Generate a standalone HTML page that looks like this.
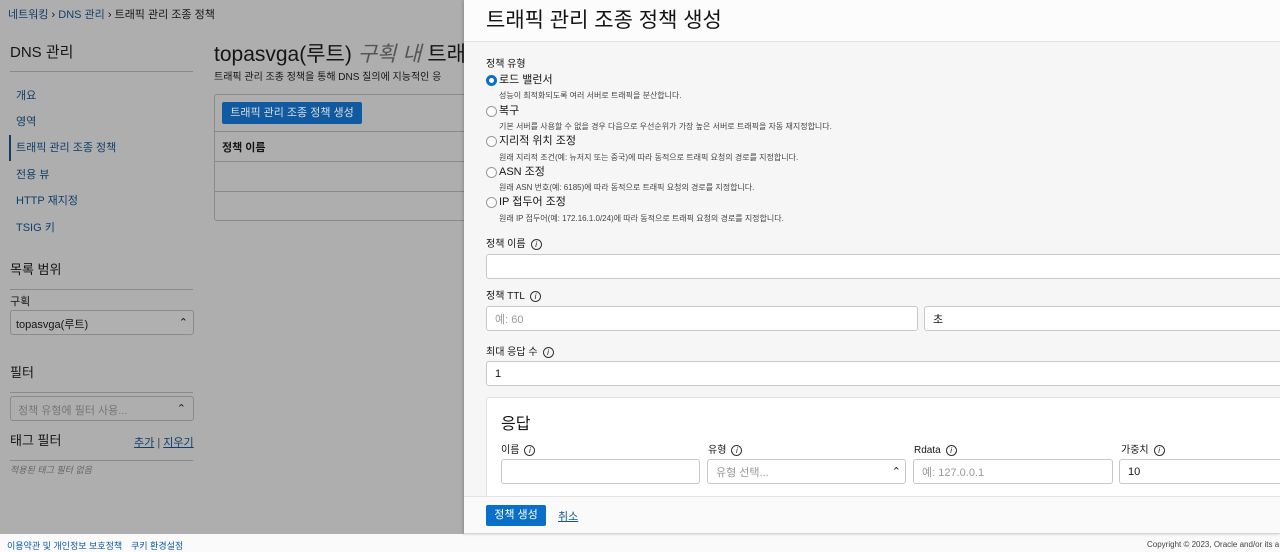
<!DOCTYPE html>
<html><head><meta charset="utf-8">
<style>
*{box-sizing:border-box;margin:0;padding:0}
body{width:1280px;height:552px;overflow:hidden;position:relative;background:#aeaeae;font-family:"Liberation Sans","Noto Sans CJK KR",sans-serif;color:#161513}
.a{position:absolute;white-space:nowrap}
.lnk{color:#0f3f6b}
.hr{position:absolute;height:1px;background:#8a8a8a}
.inp{position:absolute;background:#fff;border:1px solid #c8c8c8;border-radius:3px;font-size:11px;padding-left:8px;display:flex;align-items:center}
.info{display:inline-block;width:11px;height:11px;border:1px solid #333;border-radius:50%;font-size:8px;line-height:9px;text-align:center;font-style:italic;margin-left:5px;vertical-align:middle}
.rad{position:absolute;width:11px;height:11px;border:1px solid #999;border-radius:50%;background:#fff}
.lab{font-size:11px;color:#161513;line-height:13px}
.desc{font-size:8px;color:#444}
</style></head><body>
<div class="a" style="left:8px;top:6px;font-size:11px"><span style="color:#0f3f6b">네트워킹</span> › <span style="color:#0f3f6b">DNS 관리</span> › 트래픽 관리 조종 정책</div>
<div class="a" style="left:10px;top:41px;font-size:15px">DNS 관리</div>
<div class="hr" style="left:10px;top:71px;width:183px"></div>
<div class="a lnk" style="left:16px;top:87px;font-size:11px">개요</div>
<div class="a lnk" style="left:16px;top:113px;font-size:11px">영역</div>
<div class="a" style="left:9px;top:135px;width:2px;height:26px;background:#0f3f6b"></div>
<div class="a lnk" style="left:16px;top:139px;font-size:11px">트래픽 관리 조종 정책</div>
<div class="a lnk" style="left:16px;top:166px;font-size:11px">전용 뷰</div>
<div class="a lnk" style="left:16px;top:192px;font-size:11px">HTTP 재지정</div>
<div class="a lnk" style="left:16px;top:219px;font-size:11px">TSIG 키</div>
<div class="a" style="left:10px;top:259px;font-size:13px">목록 범위</div>
<div class="hr" style="left:10px;top:289px;width:183px"></div>
<div class="a" style="left:10px;top:293px;font-size:11px">구획</div>
<div class="a" style="left:10px;top:310px;width:184px;height:25px;border:1px solid #8a8a8a;border-radius:3px;background:#b0b0b0;font-size:11px;padding:5px 5px">topasvga(루트)<span style="float:right">⌃</span></div>
<div class="a" style="left:10px;top:362px;font-size:13px">필터</div>
<div class="hr" style="left:10px;top:392px;width:183px"></div>
<div class="a" style="left:10px;top:396px;width:184px;height:25px;border:1px solid #8a8a8a;border-radius:3px;font-size:11px;padding:5px 7px;color:#777">정책 유형에 필터 사용...<span style="float:right;color:#222">⌃</span></div>
<div class="a" style="left:10px;top:430px;font-size:13px">태그 필터</div>
<div class="a" style="left:134px;top:434px;font-size:11px;color:#0f3f6b"><u>추가</u> <span style="color:#444">|</span> <u>지우기</u></div>
<div class="hr" style="left:10px;top:460px;width:183px"></div>
<div class="a" style="left:10px;top:463px;font-size:9px;font-style:italic;color:#666">적용된 태그 필터 없음</div>

<div class="a" style="left:214px;top:38px;font-size:21px">topasvga(루트) <i style="color:#555">구획 내</i> 트래</div>
<div class="a" style="left:214px;top:68px;font-size:10px">트래픽 관리 조종 정책을 통해 DNS 질의에 지능적인 응</div>
<div class="a" style="left:214px;top:94px;width:260px;height:127px;border:1px solid #8a8a8a;border-radius:3px"></div>
<div class="a" style="left:222px;top:102px;width:140px;height:22px;background:#0f5aa0;border-radius:2px;color:#ddd;font-size:11px;text-align:center;line-height:22px">트래픽 관리 조종 정책 생성</div>
<div class="hr" style="left:215px;top:131px;width:250px"></div>
<div class="a" style="left:222px;top:139px;font-size:11px;font-weight:bold">정책 이름</div>
<div class="hr" style="left:215px;top:161px;width:250px"></div>
<div class="hr" style="left:215px;top:191px;width:250px"></div>

<div class="a" style="left:0;top:534px;width:1280px;height:18px;background:#fafafa"></div>
<div class="a" style="left:7px;top:539px;font-size:9px;color:#0f5aa0">이용약관 및 개인정보 보호정책</div>
<div class="a" style="left:131px;top:539px;font-size:9px;color:#0f5aa0">쿠키 환경설정</div>
<div class="a" style="left:1147px;top:540px;font-size:8px;color:#444">Copyright © 2023, Oracle and/or its a</div>

<div class="a" style="left:464px;top:0;width:816px;height:534px;background:#f6f6f6;box-shadow:-1px 0 3px rgba(0,0,0,.2)"></div>
<div class="a" style="left:464px;top:0;width:816px;height:42px;background:#fcfcfc;border-bottom:1px solid #e3e3e3"></div>
<div class="a" style="left:486px;top:4px;font-size:21px">트래픽 관리 조종 정책 생성</div>

<div class="a lab" style="left:486px;top:58px;font-size:10px">정책 유형</div>
<div class="rad" style="left:486px;top:75px;border:3px solid #0a6fc8"></div>
<div class="a lab" style="left:499px;top:74px">로드 밸런서</div>
<div class="a desc" style="left:499px;top:90px">성능이 최적화되도록 여러 서버로 트래픽을 분산합니다.</div>
<div class="rad" style="left:486px;top:106px"></div>
<div class="a lab" style="left:499px;top:105px">복구</div>
<div class="a desc" style="left:499px;top:121px">기본 서버를 사용할 수 없을 경우 다음으로 우선순위가 가장 높은 서버로 트래픽을 자동 재지정합니다.</div>
<div class="rad" style="left:486px;top:136px"></div>
<div class="a lab" style="left:499px;top:135px">지리적 위치 조정</div>
<div class="a desc" style="left:499px;top:152px">원래 지리적 조건(예: 뉴저지 또는 중국)에 따라 동적으로 트래픽 요청의 경로를 지정합니다.</div>
<div class="rad" style="left:486px;top:167px"></div>
<div class="a lab" style="left:499px;top:166px">ASN 조정</div>
<div class="a desc" style="left:499px;top:182px">원래 ASN 번호(예: 6185)에 따라 동적으로 트래픽 요청의 경로를 지정합니다.</div>
<div class="rad" style="left:486px;top:197px"></div>
<div class="a lab" style="left:499px;top:196px">IP 접두어 조정</div>
<div class="a desc" style="left:499px;top:213px">원래 IP 접두어(예: 172.16.1.0/24)에 따라 동적으로 트래픽 요청의 경로를 지정합니다.</div>

<div class="a lab" style="left:486px;top:238px;font-size:10px">정책 이름<span class="info">i</span></div>
<div class="inp" style="left:486px;top:254px;width:800px;height:25px"></div>
<div class="a lab" style="left:486px;top:290px;font-size:10px">정책 TTL<span class="info">i</span></div>
<div class="inp" style="left:486px;top:306px;width:432px;height:25px;color:#999">예: 60</div>
<div class="inp" style="left:924px;top:306px;width:360px;height:25px">초</div>
<div class="a lab" style="left:486px;top:346px;font-size:10px">최대 응답 수<span class="info">i</span></div>
<div class="inp" style="left:486px;top:361px;width:800px;height:25px">1</div>

<div class="a" style="left:486px;top:397px;width:800px;height:110px;background:#fff;border:1px solid #e0e0e0;border-radius:3px"></div>
<div class="a" style="left:501px;top:410px;font-size:16px">응답</div>
<div class="a lab" style="left:501px;top:444px;font-size:10px">이름<span class="info">i</span></div>
<div class="a lab" style="left:708px;top:444px;font-size:10px">유형<span class="info">i</span></div>
<div class="a lab" style="left:914px;top:444px;font-size:10px">Rdata<span class="info">i</span></div>
<div class="a lab" style="left:1121px;top:444px;font-size:10px">가중치<span class="info">i</span></div>
<div class="inp" style="left:501px;top:459px;width:199px;height:25px"></div>
<div class="inp" style="left:707px;top:459px;width:199px;height:25px;color:#999">유형 선택...<span style="position:absolute;right:4px;color:#222">⌃</span></div>
<div class="inp" style="left:913px;top:459px;width:200px;height:25px;color:#999">예: 127.0.0.1</div>
<div class="inp" style="left:1119px;top:459px;width:170px;height:25px">10</div>

<div class="a" style="left:464px;top:496px;width:816px;height:38px;background:#fafafa;border-top:1px solid #e3e3e3;border-bottom:1px solid #d5d5d5"></div>
<div class="a" style="left:486px;top:505px;width:60px;height:21px;background:#0a6fc8;border-radius:2px;color:#fff;font-size:11px;text-align:center;line-height:21px">정책 생성</div>
<div class="a" style="left:558px;top:508px;font-size:11px;color:#0f5a8a"><u>취소</u></div>
</body></html>
